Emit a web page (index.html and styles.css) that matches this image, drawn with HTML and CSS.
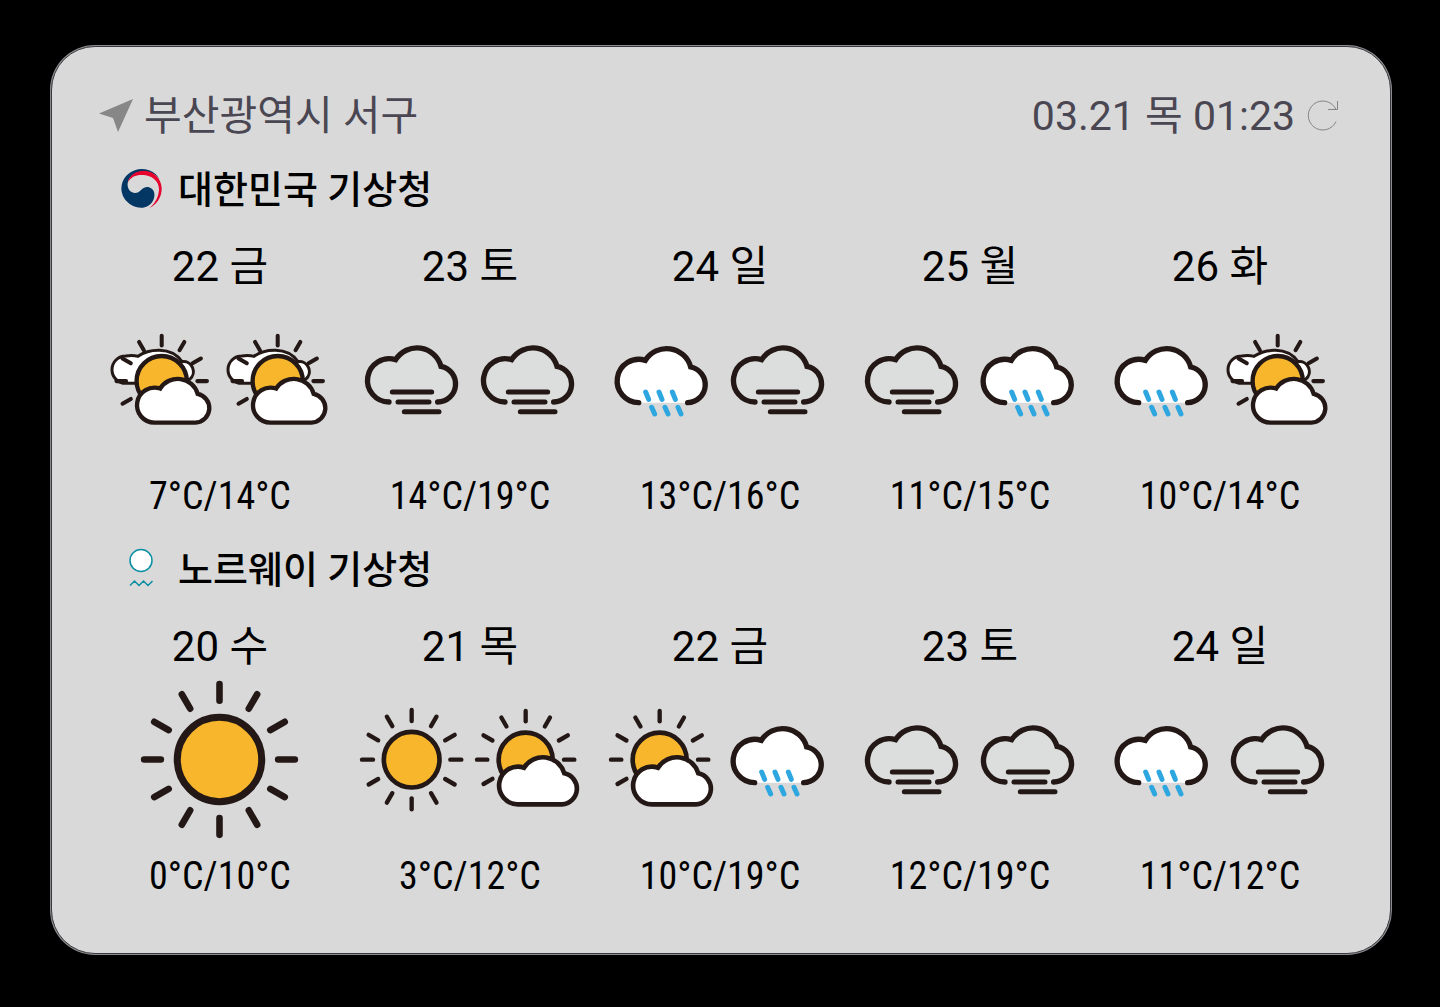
FILE: index.html
```html
<!DOCTYPE html>
<html lang="ko">
<head>
<meta charset="utf-8">
<title>주간 날씨</title>
<link rel="stylesheet" href="styles.css">
</head>
<body>
<svg class="sprite" aria-hidden="true">
  <defs>
    <symbol id="sun" viewBox="10 35 348 348">
      <g class="ink" stroke-width="13" transform="translate(183 208)">
        <path d="M0-149V-116"/>
        <path d="M0-149V-116" transform="rotate(30)"/>
        <path d="M0-149V-116" transform="rotate(60)"/>
        <path d="M0-149V-116" transform="rotate(90)"/>
        <path d="M0-149V-116" transform="rotate(120)"/>
        <path d="M0-149V-116" transform="rotate(150)"/>
        <path d="M0-149V-116" transform="rotate(180)"/>
        <path d="M0-149V-116" transform="rotate(210)"/>
        <path d="M0-149V-116" transform="rotate(240)"/>
        <path d="M0-149V-116" transform="rotate(270)"/>
        <path d="M0-149V-116" transform="rotate(300)"/>
        <path d="M0-149V-116" transform="rotate(330)"/>
        <circle r="83.5" fill="#f8b62d" stroke-width="14"/>
      </g>
    </symbol>
    <g id="sun-cloud">
      <g class="ink" stroke-width="13" transform="translate(527 209)">
        <path d="M0-146V-115"/>
        <path d="M0-146V-115" transform="rotate(30)"/>
        <path d="M0-146V-115" transform="rotate(60)"/>
        <path d="M0-146V-115" transform="rotate(90)"/>
        <path d="M0-146V-115" transform="rotate(240)"/>
        <path d="M0-146V-115" transform="rotate(270)"/>
        <path d="M0-146V-115" transform="rotate(300)"/>
        <path d="M0-146V-115" transform="rotate(330)"/>
        <circle r="81" fill="#f8b62d" stroke-width="14"/>
      </g>
      <path class="ink" fill="#fff" stroke-width="14" d="M504 343A56.500 56.500 0 1 1 522 233A67 67 0 0 1 643 250A47 47 0 0 1 636 343Z"/>
    </g>
    <symbol id="partly" viewBox="360 36 348 348">
      <use href="#sun-cloud"/>
    </symbol>
    <symbol id="mostly" viewBox="11 6 348 348">
      <path class="ink" fill="#fff" stroke-width="9" d="M110 190H76A41 41 0 0 1 76 108Q96 104 113 109Q140 90 178 91Q222 92 245 125A30 30 0 0 1 268 178Z"/>
      <use href="#sun-cloud" transform="translate(-306 -11) scale(.93)"/>
    </symbol>
    <symbol id="fog" viewBox="12 5 348 348">
      <path class="ink" fill="#dcdedd" stroke-width="16" d="M117 245A65 65 0 1 1 137 118A75 75 0 0 1 273 138A54 54 0 0 1 263 245"/>
      <path class="ink" stroke-width="15" d="M127 215H245M144 245H237M163 274H267"/>
    </symbol>
    <symbol id="rain" viewBox="11 5 348 348">
      <path class="ink" fill="#fff" stroke-width="16" d="M115 247A65 65 0 1 1 135 120A75 75 0 0 1 271 140A54 54 0 0 1 262 247"/>
      <path d="M136 215L145 237M176 215L185 237M216 215L225 237M154 261L163 281M194 261L203 281M233 261L242 281" fill="none" stroke="#2ea7e0" stroke-width="15" stroke-linecap="round"/>
    </symbol>
  </defs>
</svg>

<main class="widget">
  <header class="topbar">
    <h1 class="place">
      <svg class="arrow" viewBox="0 0 34 34" aria-hidden="true"><path d="M34 0L0 14.500L14 19L19 33Z" fill="#878787"/></svg>
      부산광역시 서구
    </h1>
    <div class="updated">
      <time>03.21 목 01:23</time>
      <button class="refresh" type="button" aria-label="새로고침">
        <svg viewBox="0 0 32 32" aria-hidden="true"><path d="M29 21.500A14.500 14.500 0 1 1 29 9.500M30.500 1V9.500H21" fill="none" stroke="#858585"/></svg>
      </button>
    </div>
  </header>

  <section class="source">
    <h2 class="agency">
      <svg class="logo" viewBox="92 267 124 120" aria-hidden="true">
        <path d="M210 295A61 58 0 1 0 160 380C182 377 197 358 194 337C191 321 175 314 162 321C151 327 149 336 137 336C121 336 112 322 114 307C119 278 148 270 168 272C188 274 201 282 210 295Z" fill="#043764"/>
        <path d="M115 304C123 286 145 279 168 283C192 288 208 303 208 326C206 351 194 369 179 381C203 369 217 347 216 320C214 292 193 270 164 269C139 269 119 282 115 304Z" fill="#e6032e"/>
      </svg>
      대한민국 기상청
    </h2>
    <ul class="days">
      <li class="day"><h3 class="date">22 금</h3><div class="sky"><svg class="icon"><use href="#mostly"/></svg><svg class="icon"><use href="#mostly"/></svg></div><p class="temp">7°C/14°C</p></li>
      <li class="day"><h3 class="date">23 토</h3><div class="sky"><svg class="icon"><use href="#fog"/></svg><svg class="icon"><use href="#fog"/></svg></div><p class="temp">14°C/19°C</p></li>
      <li class="day"><h3 class="date">24 일</h3><div class="sky"><svg class="icon"><use href="#rain"/></svg><svg class="icon"><use href="#fog"/></svg></div><p class="temp">13°C/16°C</p></li>
      <li class="day"><h3 class="date">25 월</h3><div class="sky"><svg class="icon"><use href="#fog"/></svg><svg class="icon"><use href="#rain"/></svg></div><p class="temp">11°C/15°C</p></li>
      <li class="day"><h3 class="date">26 화</h3><div class="sky"><svg class="icon"><use href="#rain"/></svg><svg class="icon"><use href="#mostly"/></svg></div><p class="temp">10°C/14°C</p></li>
    </ul>
  </section>

  <section class="source">
    <h2 class="agency">
      <svg class="logo" viewBox="0 0 42 40" aria-hidden="true">
        <circle cx="21" cy="10.500" r="11" fill="#fff" stroke="#0b8fa3" stroke-width="1.500"/>
        <path d="M10 35.500L14.500 31L19 35.500L23.500 31L28 35.500L32.500 31" fill="none" stroke="#0b8fa3" stroke-width="1.500"/>
      </svg>
      노르웨이 기상청
    </h2>
    <ul class="days">
      <li class="day"><h3 class="date">20 수</h3><div class="sky"><svg class="icon large"><use href="#sun"/></svg></div><p class="temp">0°C/10°C</p></li>
      <li class="day"><h3 class="date">21 목</h3><div class="sky"><svg class="icon"><use href="#sun"/></svg><svg class="icon"><use href="#partly"/></svg></div><p class="temp">3°C/12°C</p></li>
      <li class="day"><h3 class="date">22 금</h3><div class="sky"><svg class="icon"><use href="#partly"/></svg><svg class="icon"><use href="#rain"/></svg></div><p class="temp">10°C/19°C</p></li>
      <li class="day"><h3 class="date">23 토</h3><div class="sky"><svg class="icon"><use href="#fog"/></svg><svg class="icon"><use href="#fog"/></svg></div><p class="temp">12°C/19°C</p></li>
      <li class="day"><h3 class="date">24 일</h3><div class="sky"><svg class="icon"><use href="#rain"/></svg><svg class="icon"><use href="#fog"/></svg></div><p class="temp">11°C/12°C</p></li>
    </ul>
  </section>
</main>
</body>
</html>
```
FILE: styles.css
```css
* {
  box-sizing: border-box;
  margin: 0;
  padding: 0;
}

body {
  background: #000;
  color: #000;
  font-family: Roboto, "Noto Sans CJK KR", sans-serif;
  padding: 46px 49px 52px 51px;
}

.sprite {
  position: absolute;
  width: 0;
  height: 0;
}

.ink {
  stroke: #231815;
  stroke-linecap: round;
}

.widget {
  background: #d9d9d9;
  border: 1px solid #3a383c;
  border-radius: 44px;
  box-shadow: 0 0 0 1px #8c8a8e;
  padding: 43px 45px 33px 43px;
}

.topbar {
  display: flex;
  align-items: center;
  justify-content: space-between;
  height: 52px;
  margin-bottom: 18px;
  padding: 0 6px 0 4px;
  color: #4a4753;
  font-size: 41px;
  line-height: 52px;
}

.place {
  display: flex;
  align-items: center;
  gap: 11px;
  font-size: 41px;
  font-weight: 400;
}

.arrow {
  width: 34px;
  height: 34px;
}

.updated {
  display: flex;
  align-items: center;
  gap: 12px;
}

.refresh {
  width: 32px;
  height: 32px;
  border: 0;
  background: none;
  cursor: pointer;
}

.refresh svg {
  display: block;
}

.source {
  height: 380px;
}

.agency {
  display: flex;
  align-items: center;
  gap: 16px;
  height: 60px;
  margin-bottom: 22px;
  padding-left: 25px;
  font-size: 38px;
  font-weight: 500;
  line-height: 60px;
}

.logo {
  width: 42px;
  height: 40px;
  overflow: visible;
}

.days {
  display: grid;
  grid-template-columns: repeat(5, 1fr);
  list-style: none;
}

.day {
  text-align: center;
}

.date {
  font-size: 42px;
  font-weight: 400;
  line-height: 50px;
}

.sky {
  display: flex;
  align-items: center;
  justify-content: center;
  height: 176px;
}

.icon {
  width: 116px;
  height: 116px;
}

.icon.large {
  width: 176px;
  height: 176px;
}

.temp {
  margin-top: 4px;
  font-family: "Roboto Condensed", Roboto, "Noto Sans CJK KR", sans-serif;
  font-size: 38px;
  font-weight: 400;
  line-height: 48px;
}
```
